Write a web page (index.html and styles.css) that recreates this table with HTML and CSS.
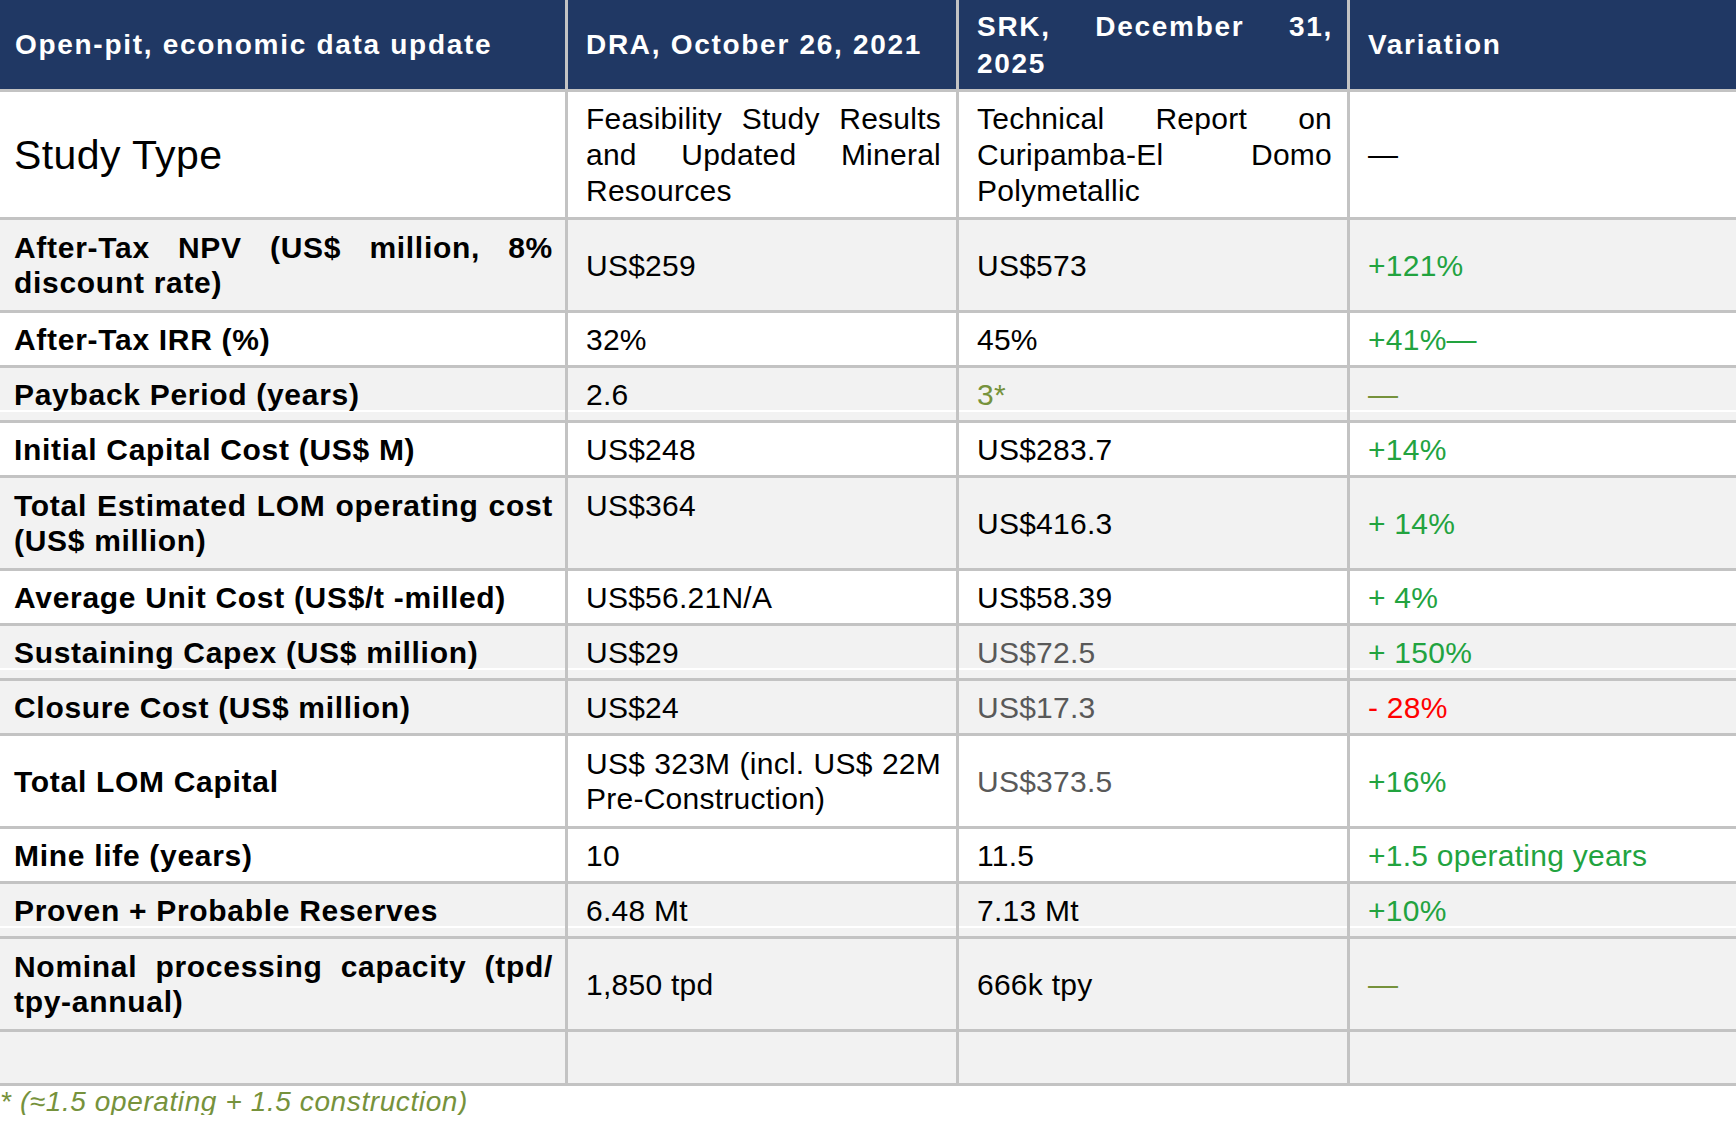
FILE: index.html
```html
<!DOCTYPE html>
<html lang="en">
<head>
<meta charset="utf-8">
<title>Open-pit, economic data update</title>
<link rel="stylesheet" href="styles.css">
</head>
<body>
<table class="data">
  <colgroup>
    <col class="c1"><col class="c2"><col class="c3"><col class="c4">
  </colgroup>
  <thead>
    <tr class="head">
      <th>Open-pit, economic data update</th>
      <th>DRA, October 26, 2021</th>
      <th class="srk"><span class="jl">SRK, December 31,</span><span class="ln">2025</span></th>
      <th>Variation</th>
    </tr>
  </thead>
  <tbody>
    <tr class="r3 w">
      <td class="study">Study Type</td>
      <td class="lh36">Feasibility Study Results and Updated Mineral Resources</td>
      <td class="lh36">Technical Report on Curipamba-El Domo Polymetallic</td>
      <td>—</td>
    </tr>
    <tr class="r2 g">
      <td>After-Tax NPV (US$ million, 8% discount rate)</td>
      <td>US$259</td>
      <td>US$573</td>
      <td class="up">+121%</td>
    </tr>
    <tr class="r1 w">
      <td>After-Tax IRR (%)</td>
      <td>32%</td>
      <td>45%</td>
      <td class="up">+41%—</td>
    </tr>
    <tr class="r1 strip">
      <td>Payback Period (years)</td>
      <td>2.6</td>
      <td class="olive">3*</td>
      <td class="olive">—</td>
    </tr>
    <tr class="r1 w">
      <td>Initial Capital Cost (US$ M)</td>
      <td>US$248</td>
      <td>US$283.7</td>
      <td class="up">+14%</td>
    </tr>
    <tr class="r2 g">
      <td>Total Estimated LOM operating cost (US$ million)</td>
      <td class="top">US$364</td>
      <td>US$416.3</td>
      <td class="up">+ 14%</td>
    </tr>
    <tr class="r1 w">
      <td>Average Unit Cost (US$/t -milled)</td>
      <td>US$56.21N/A</td>
      <td>US$58.39</td>
      <td class="up">+ 4%</td>
    </tr>
    <tr class="r1 strip">
      <td>Sustaining Capex (US$ million)</td>
      <td>US$29</td>
      <td class="muted">US$72.5</td>
      <td class="up">+ 150%</td>
    </tr>
    <tr class="r1 g">
      <td>Closure Cost (US$ million)</td>
      <td>US$24</td>
      <td class="muted">US$17.3</td>
      <td class="down">- 28%</td>
    </tr>
    <tr class="r2 w">
      <td>Total LOM Capital</td>
      <td>US$ 323M (incl. US$ 22M Pre-Construction)</td>
      <td class="muted">US$373.5</td>
      <td class="up">+16%</td>
    </tr>
    <tr class="r1 w">
      <td>Mine life (years)</td>
      <td>10</td>
      <td>11.5</td>
      <td class="up">+1.5 operating years</td>
    </tr>
    <tr class="r1 strip">
      <td>Proven + Probable Reserves</td>
      <td>6.48 Mt</td>
      <td>7.13 Mt</td>
      <td class="up">+10%</td>
    </tr>
    <tr class="r2 g">
      <td>Nominal processing capacity (tpd/<wbr>tpy-annual)</td>
      <td>1,850 tpd</td>
      <td>666k tpy</td>
      <td class="olive">—</td>
    </tr>
    <tr class="r0 g">
      <td></td>
      <td></td>
      <td></td>
      <td></td>
    </tr>
  </tbody>
</table>
<p class="note">* (≈1.5 operating + 1.5 construction)</p>
</body>
</html>
```

FILE: styles.css
```css
html, body {
  margin: 0;
  padding: 0;
  background: #ffffff;
}

body {
  font-family: "Liberation Sans", Arial, sans-serif;
  color: #000000;
}

.data {
  width: 1736px;
  table-layout: fixed;
  border-collapse: separate;
  border-spacing: 0;
}

.c1 { width: 568px; }
.c2 { width: 391px; }
.c3 { width: 391px; }
.c4 { width: 386px; }

.data th,
.data td {
  box-sizing: border-box;
  border-right: 3px solid #c3c3c3;
  border-bottom: 3px solid #c3c3c3;
  padding: 0 15px 0 18px;
  vertical-align: middle;
  text-align: justify;
}

.data th:last-child,
.data td:last-child {
  border-right: 0;
}

/* header */
.head { height: 92px; }

.data th {
  background: #203864;
  color: #ffffff;
  font-size: 28px;
  font-weight: bold;
  letter-spacing: 1.7px;
  line-height: 37px;
  text-align: left;
}

.data th:first-child {
  padding-left: 15px;
}

.data th.srk {
  padding-left: 18px;
  padding-right: 14px;
}

.srk .jl {
  display: block;
  text-align: justify;
  text-align-last: justify;
}

.srk .ln {
  display: block;
}

/* body cells */
.data td {
  font-size: 30px;
  line-height: 35px;
  letter-spacing: 0.25px;
}

.data td:first-child {
  font-weight: bold;
  letter-spacing: 0.7px;
  padding-left: 14px;
  padding-right: 12px;
}

.data td.study {
  font-weight: normal;
  font-size: 41px;
  letter-spacing: 0.4px;
  line-height: 46px;
}

.data td.lh36 {
  line-height: 36px;
}

.data td.top {
  vertical-align: top;
  padding-top: 10px;
}

/* rows */
.r0 { height: 54px; }
.r1 { height: 55px; }
.r2 { height: 93px; }
.r3 { height: 128px; }

.w td { background: #ffffff; }
.g td { background: #f2f2f2; }

.strip td {
  background: linear-gradient(to top, #f2f2f2 0, #f2f2f2 8px, #ffffff 8px, #ffffff 10px, #f2f2f2 10px, #f2f2f2 100%);
}

/* value colours */
.up { color: #22a33f; }
.olive { color: #76923c; }
.down { color: #ff0000; }
.muted { color: #595959; }

.note {
  margin: 3px 0 0;
  font-size: 28px;
  font-style: italic;
  line-height: 26px;
  letter-spacing: 0.6px;
  color: #76923c;
}
```
